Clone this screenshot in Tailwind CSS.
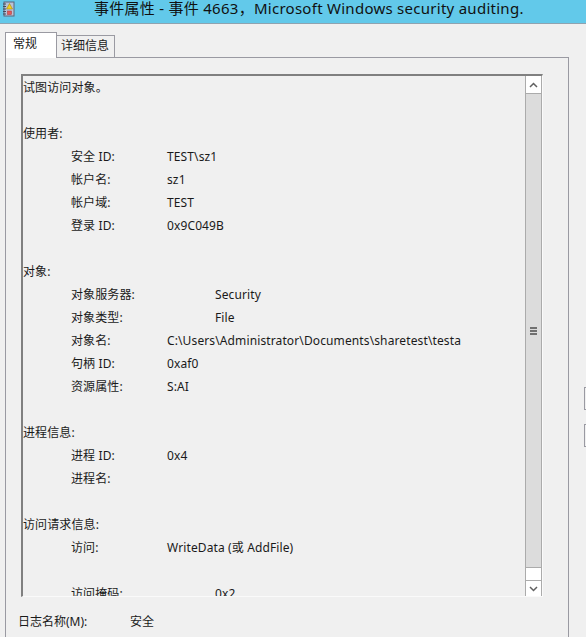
<!doctype html><html><head><meta charset="utf-8"><script src="https://cdn.jsdelivr.net/npm/@tailwindcss/browser@4"></script></head>
<body class="w-[586px] h-[637px] overflow-hidden bg-[#f0f0f0] font-['Noto_Sans','Noto_Sans_CJK_SC',sans-serif] text-[12px] text-[#1a1a1a]">
<header class="h-6 bg-[#62c9ea] border-b border-[#8fa3b0] flex items-start relative">
  <svg class="absolute left-[2px] top-[1px] w-[13px] h-[16px]" viewBox="0 0 13 16">
    <rect x="2" y="1" width="10" height="14" fill="#b9c2d6" stroke="#5a6478"/>
    <path d="M1 3h3M1 5.500h3M1 8h3M1 10.500h3M1 13h3" stroke="#444c5c"/>
    <path d="M7.500 2.500L10.500 8H4.500Z" fill="#f4d020" stroke="#9a7a00" stroke-width=".5"/>
    <rect x="5.500" y="10" width="4" height="3.500" fill="#e05a5a" stroke="#a33"  stroke-width=".5"/>
  </svg>
  <h1 class="ml-[94px] text-[15px] leading-[17px] tracking-[0.27px] text-[#111] whitespace-nowrap">事件属性 - 事件 4663，Microsoft Windows security auditing.</h1>
</header>
<div class="relative pl-[5px] w-[569px]">
  <nav class="flex items-end h-[33px]">
    <div class="w-[52px] bg-white border border-b-0 border-[#9a9aa2] pl-[7px] pt-[1px] relative z-10 -mb-px leading-[20px] h-[26px]">常规</div>
    <div class="w-[58px] h-[22px] bg-[#f0f0f0] border border-b-0 border-l-0 border-[#9a9aa2] pl-[4px] leading-[20px]">详细信息</div>
  </nav>
  <section class="h-[600px] border border-[#9a9aa2] pt-[16px] pl-[15px] pr-[24px]">
    <div class="w-[522px] h-[523px] flex border-l-2 border-t-2 border-[#808080] border-r border-b border-r-[#fafafa] border-b-[#fafafa] overflow-hidden">
      <div class="w-[502px] h-[521px] overflow-hidden tracking-[0.12px]">
        <div class="h-[23px] leading-[23px] whitespace-nowrap">试图访问对象。</div>
        <div class="h-[23px]"></div>
        <div class="h-[23px] leading-[23px] whitespace-nowrap">使用者:</div>
        <div class="h-[23px] leading-[23px] pl-[48px] flex"><span class="w-[96px]">安全 ID:</span><span>TEST\sz1</span></div>
        <div class="h-[23px] leading-[23px] pl-[48px] flex"><span class="w-[96px]">帐户名:</span><span>sz1</span></div>
        <div class="h-[23px] leading-[23px] pl-[48px] flex"><span class="w-[96px]">帐户域:</span><span>TEST</span></div>
        <div class="h-[23px] leading-[23px] pl-[48px] flex"><span class="w-[96px]">登录 ID:</span><span>0x9C049B</span></div>
        <div class="h-[23px]"></div>
        <div class="h-[23px] leading-[23px] whitespace-nowrap">对象:</div>
        <div class="h-[23px] leading-[23px] pl-[48px] flex"><span class="w-[144px]">对象服务器:</span><span>Security</span></div>
        <div class="h-[23px] leading-[23px] pl-[48px] flex"><span class="w-[144px]">对象类型:</span><span>File</span></div>
        <div class="h-[23px] leading-[23px] pl-[48px] flex"><span class="w-[96px]">对象名:</span><span>C:\Users\Administrator\Documents\sharetest\testa</span></div>
        <div class="h-[23px] leading-[23px] pl-[48px] flex"><span class="w-[96px]">句柄 ID:</span><span>0xaf0</span></div>
        <div class="h-[23px] leading-[23px] pl-[48px] flex"><span class="w-[96px]">资源属性:</span><span>S:AI</span></div>
        <div class="h-[23px]"></div>
        <div class="h-[23px] leading-[23px] whitespace-nowrap">进程信息:</div>
        <div class="h-[23px] leading-[23px] pl-[48px] flex"><span class="w-[96px]">进程 ID:</span><span>0x4</span></div>
        <div class="h-[23px] leading-[23px] pl-[48px] flex"><span class="w-[96px]">进程名:</span></div>
        <div class="h-[23px]"></div>
        <div class="h-[23px] leading-[23px] whitespace-nowrap">访问请求信息:</div>
        <div class="h-[23px] leading-[23px] pl-[48px] flex"><span class="w-[96px]">访问:</span><span>WriteData (或 AddFile)</span></div>
        <div class="h-[23px]"></div>
        <div class="h-[23px] leading-[23px] pl-[48px] flex"><span class="w-[144px]">访问掩码:</span><span>0x2</span></div>
      </div>
      <div class="w-[17px] h-[521px] flex flex-col bg-white border-x border-[#ababab]">
        <div class="h-[17px] flex items-center justify-center"><svg class="w-[9px] h-[6px]" viewBox="0 0 9 6"><path d="M1 5L4.500 1.500L8 5" fill="none" stroke="#606060" stroke-width="1.500"/></svg></div>
        <div class="h-[475px] bg-[#dcdcdc] border-y border-[#ababab] flex items-center justify-center">
          <div class="w-[7px] flex flex-col gap-px"><div class="h-[2px] bg-[#707070]"></div><div class="h-[2px] bg-[#707070]"></div><div class="h-[2px] bg-[#707070]"></div></div>
        </div>
        <div class="flex-1 flex flex-col justify-end">
          <div class="h-[17px] border-y border-[#ababab] flex items-center justify-center"><svg class="w-[9px] h-[6px]" viewBox="0 0 9 6"><path d="M1 1L4.500 4.500L8 1" fill="none" stroke="#606060" stroke-width="1.500"/></svg></div>
        </div>
      </div>
    </div>
    <div class="flex mt-[15px] -ml-[3px] leading-[20px]"><span class="w-[112px]">日志名称(M):</span><span>安全</span></div>
  </section>
</div>
<div class="absolute left-[584px] top-[387px] w-[6px] h-[23px] border border-[#9a9aa2]"></div>
<div class="absolute left-[584px] top-[424px] w-[6px] h-[23px] border border-[#9a9aa2]"></div>
</body></html>
